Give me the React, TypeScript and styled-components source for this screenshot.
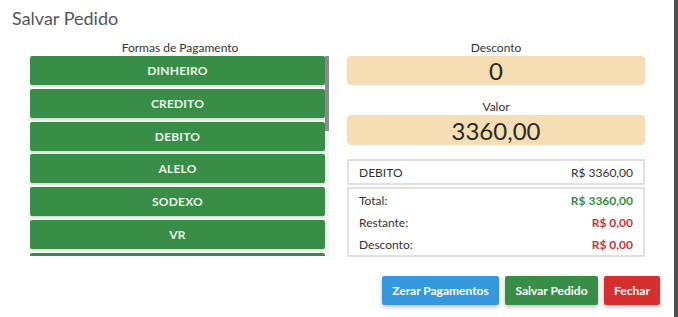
import React from 'react';
import styled, { createGlobalStyle } from 'styled-components';

const GlobalStyle = createGlobalStyle`
  body {
    margin: 0;
    background: #4f4f4f;
    font-family: Lato, "Noto Sans", sans-serif;
  }
`;

const Page = styled.div`
  width: 678px;
  height: 317px;
  display: flex;
  overflow: hidden;
`;

const Modal = styled.div`
  width: 674px;
  height: 317px;
  background: #ffffff;
  display: flex;
  flex-direction: column;
`;

const Title = styled.h4`
  margin: 0;
  padding: 7px 12px 0;
  height: 33px;
  font-size: 18px;
  font-weight: 400;
  line-height: 22px;
  color: #555;
`;

const Body = styled.div`
  display: grid;
  grid-template-columns: 300px 298px;
  column-gap: 17px;
  padding-left: 30px;
`;

const Column = styled.div`
  display: flex;
  flex-direction: column;
`;

const Label = styled.div<{ $top?: number }>`
  height: 16px;
  line-height: 16px;
  margin-top: ${(p) => p.$top || 0}px;
  font-size: 12px;
  color: #333;
  text-align: center;
`;

const List = styled.div`
  height: 200px;
  overflow: hidden;
  display: flex;
`;

const Stack = styled.div`
  width: 295px;
  display: flex;
  flex-direction: column;
  gap: 3.8px;
`;

const Track = styled.div`
  width: 4px;
  background: #f2f2f2;
`;

const Thumb = styled.div`
  height: 75px;
  background: #8a8a8a;
`;

const PayButton = styled.button`
  flex: none;
  height: 29px;
  border: none;
  border-radius: 2px;
  background: #388e46;
  color: #e8f5e9;
  font-family: inherit;
  font-size: 12px;
  font-weight: 700;
  letter-spacing: 0.2px;
  box-shadow: 0 2px 2px rgba(56, 142, 70, 0.25);
`;

const Field = styled.div<{ $height: number }>`
  height: ${(p) => p.$height}px;
  border-radius: 4px;
  background: #f6deb4;
  color: #2a2a2a;
  font-size: 24px;
  display: flex;
  align-items: center;
  justify-content: center;
`;

const Box = styled.div<{ $top: number }>`
  margin-top: ${(p) => p.$top}px;
  border: 2px solid #e2e2e2;
  padding: 0 10px;
  display: flex;
  flex-direction: column;
`;

const Row = styled.div<{ $height: number }>`
  height: ${(p) => p.$height}px;
  display: flex;
  align-items: center;
  justify-content: space-between;
  font-size: 12px;
  color: #333;
`;

const Amount = styled.span<{ $color?: string }>`
  color: ${(p) => p.$color || '#333'};
  font-weight: ${(p) => (p.$color ? 700 : 400)};
`;

const Footer = styled.div`
  display: flex;
  justify-content: flex-end;
  gap: 6px;
  padding-right: 14px;
  margin-top: 19px;
`;

const ActionButton = styled.button<{ $bg: string; $w: number }>`
  width: ${(p) => p.$w}px;
  height: 29px;
  border: none;
  border-radius: 2px;
  background: ${(p) => p.$bg};
  color: #fff;
  font-family: inherit;
  font-size: 12px;
  font-weight: 700;
  box-shadow: 0 2px 4px rgba(0, 0, 0, 0.25);
`;

const methods = ['DINHEIRO', 'CREDITO', 'DEBITO', 'ALELO', 'SODEXO', 'VR', 'VA'];

export default function App() {
  return (
    <Page>
      <GlobalStyle />
      <Modal>
        <Title>Salvar Pedido</Title>
        <Body>
          <Column>
            <Label>Formas de Pagamento</Label>
            <List>
              <Stack>
                {methods.map((m) => (
                  <PayButton key={m}>{m}</PayButton>
                ))}
              </Stack>
              <Track>
                <Thumb />
              </Track>
            </List>
          </Column>
          <Column>
            <Label>Desconto</Label>
            <Field $height={29}>0</Field>
            <Label $top={14}>Valor</Label>
            <Field $height={30}>3360,00</Field>
            <Box $top={14}>
              <Row $height={22}>
                <span>DEBITO</span>
                <span>R$ 3360,00</span>
              </Row>
            </Box>
            <Box $top={2}>
              <Row $height={23}>
                <span>Total:</span>
                <Amount $color="#3a8d47">R$ 3360,00</Amount>
              </Row>
              <Row $height={21}>
                <span>Restante:</span>
                <Amount $color="#c9343c">R$ 0,00</Amount>
              </Row>
              <Row $height={22}>
                <span>Desconto:</span>
                <Amount $color="#c9343c">R$ 0,00</Amount>
              </Row>
            </Box>
          </Column>
        </Body>
        <Footer>
          <ActionButton $bg="#3598dc" $w={117}>Zerar Pagamentos</ActionButton>
          <ActionButton $bg="#388e46" $w={93}>Salvar Pedido</ActionButton>
          <ActionButton $bg="#d3302f" $w={56}>Fechar</ActionButton>
        </Footer>
      </Modal>
    </Page>
  );
}
